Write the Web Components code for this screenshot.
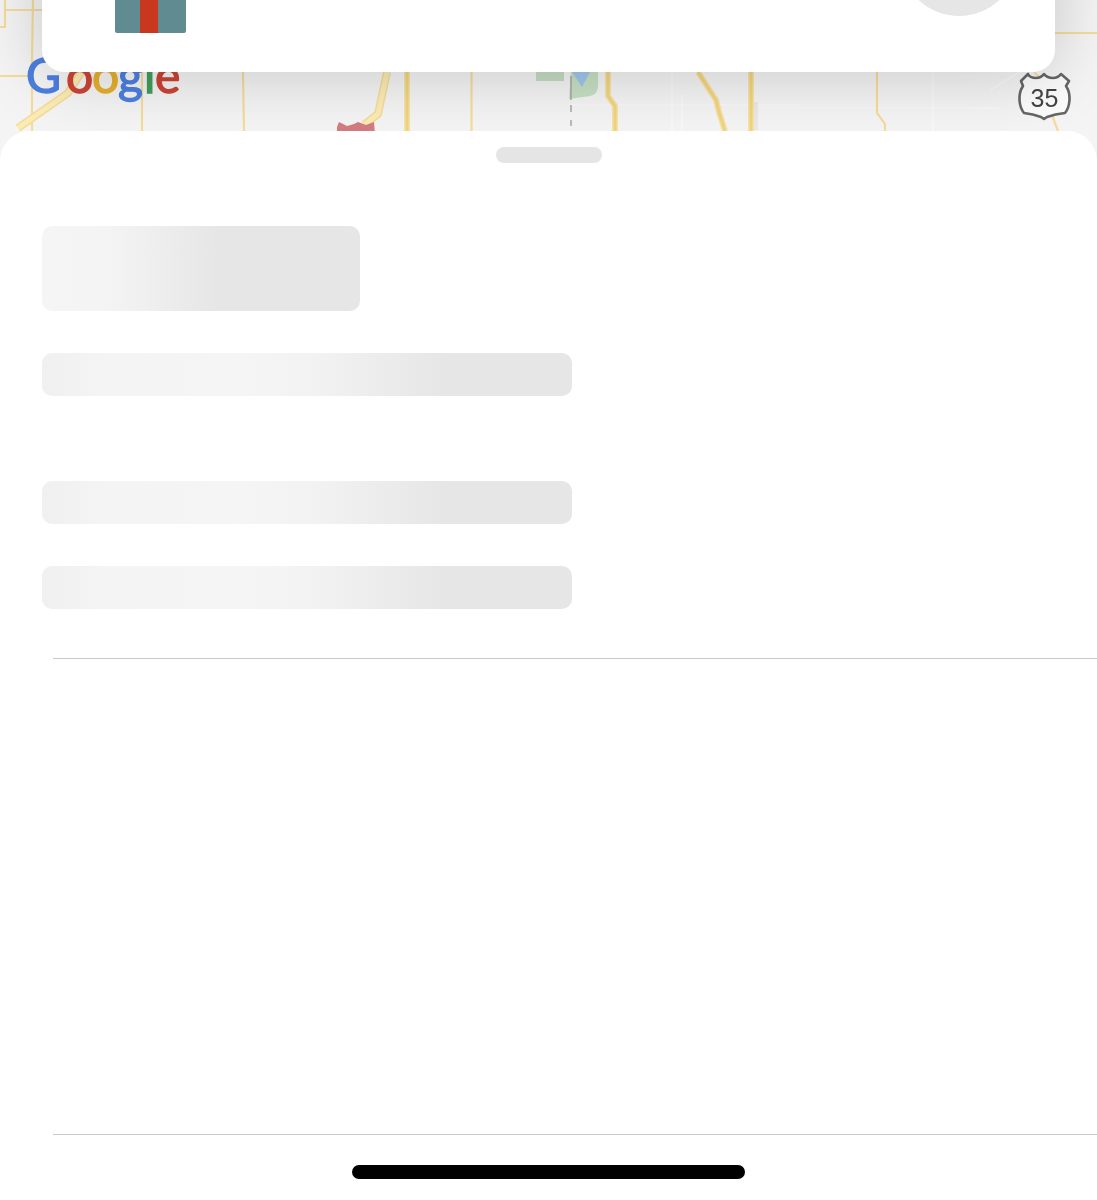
<!DOCTYPE html>
<html lang="en">
<head>
<meta charset="utf-8">
<title>Loading sheet</title>
<style>
    html, body { margin: 0; padding: 0; background: #fff; }
    body { width: 1097px; height: 1200px; overflow: hidden; font-family: "Liberation Sans", Arial, sans-serif; }
</style>
</head>
<body>
<map-view>
    <trip-card></trip-card>
</map-view>
<bottom-sheet>
    <skeleton-block size="title"></skeleton-block>
    <skeleton-block></skeleton-block>
    <skeleton-block class="gap"></skeleton-block>
    <skeleton-block></skeleton-block>
    <sheet-divider slot="rows"></sheet-divider>
    <sheet-divider slot="rows" class="last"></sheet-divider>
    <home-bar slot="rows"></home-bar>
</bottom-sheet>

<script>
class MapView extends HTMLElement {
    connectedCallback() {
        this.attachShadow({ mode: 'open' });
        this.shadowRoot.innerHTML = `
            <style>
                :host {
                    display: block;
                    position: relative;
                    height: 160px;
                    overflow: hidden;
                    background: #f4f4f4;
                }
                svg { position: absolute; left: 0; top: 0; filter: blur(0.6px); }
                .thin { fill: none; stroke: #f4dc9c; stroke-width: 2.2; }
                .casing { fill: none; stroke: #f6e3a8; stroke-width: 6; stroke-linejoin: round; }
                .core { fill: none; stroke: #f2d47e; stroke-width: 3; stroke-linejoin: round; }
                .pale { fill: none; stroke: #f4dc98; stroke-width: 8; stroke-linejoin: round; }
                .pale-core { fill: none; stroke: #fcebb4; stroke-width: 5; stroke-linejoin: round; }
                .minor { fill: none; stroke: #fafafa; stroke-width: 1.2; }
                .logo { font: 400 48px Lato, sans-serif; letter-spacing: -3px; stroke-width: 1.3; }
            </style>
            <svg width="1097" height="160" viewBox="0 0 1097 160">
                <!-- minor streets -->
                <path class="minor" d="M570 105H800M682 95V131M672 72V131M760 108H1000M933 72V131M990 90L1020 72"/>
                <path d="M750 102h8v28h-8z" fill="#e9e9e9"/>
                <!-- park and water -->
                <path d="M536 72h28v9h-28z" fill="#c5dcc2"/>
                <path d="M571 72h27v14q0 8-8 10l-21 3z" fill="#c6e0c4"/>
                <path d="M572 72l4 6 6 9 8-15z" fill="#a0c6ee"/>
                <path d="M571 76V100M571 105V112M571 120V126" stroke="#a8a8a8" stroke-width="1.5" fill="none"/>
                <!-- thin roads -->
                <path class="thin" d="M33 0L32 60V131M6 10H42M5 0V27H0M0 76H30M142 72V131M243 72L244 131M471.500 72V131M1055 33H1097"/>
                <path class="thin" d="M877 72V113L885 124V131"/>
                <path class="thin" d="M1052 115L1058 131M1034 72L1040 78"/>
                <!-- arterials -->
                <path class="pale" d="M84 68L68 93L18 128"/>
                <path class="pale" d="M387 72L378 114L364 125"/>
                <path class="pale-core" d="M84 68L68 93L18 128"/>
                <path class="pale-core" d="M387 72L378 114L364 125"/>
                <g>
                    <path class="casing" d="M407 72V131"/>
                    <path class="casing" d="M608 72V96L615 106V131"/>
                    <path class="casing" d="M698 72L716 100L719 112L725 131"/>
                    <path class="casing" d="M751 72V131"/>
                    <path class="core" d="M407 72V131"/>
                    <path class="core" d="M608 72V96L615 106V131"/>
                    <path class="core" d="M698 72L716 100L719 112L725 131"/>
                    <path class="core" d="M751 72V131"/>
                </g>
                <!-- red landmark -->
                <path d="M337 135V127L339 122L347 126L354 124L358 122L366 125L374 122L375 135z" fill="#d27c7e"/>
                <!-- Google wordmark -->
                <text class="logo" y="92.500" x="26 66 92 118 144 155"><tspan fill="#4c7fe0" stroke="#4c7fe0">G</tspan><tspan fill="#cb4435" stroke="#cb4435">o</tspan><tspan fill="#e5b02e" stroke="#e5b02e">o</tspan><tspan fill="#4c7fe0" stroke="#4c7fe0">g</tspan><tspan fill="#3f9f58" stroke="#3f9f58">l</tspan><tspan fill="#cb4435" stroke="#cb4435">e</tspan></text>
                <!-- US 35 shield -->
                <path d="M1021 81L1028 74Q1030 78 1036 78Q1041 78 1044 74Q1047 78 1053 78Q1058 78 1061 74L1069 81L1066 86Q1070 92 1069.500 100Q1069 108 1065 113Q1055 114 1047 117L1044 119L1041 117Q1033 114 1024 113Q1020 108 1019.500 100Q1019 92 1023 86z"
                      fill="#fbfbfb" stroke="#666" stroke-width="2.600" stroke-linejoin="round"/>
                <text x="1044.500" y="107" text-anchor="middle" font-family="Liberation Sans, Arial, sans-serif" font-size="25" fill="#444">35</text>
            </svg>
            <slot></slot>
        `;
    }
}

class TripCard extends HTMLElement {
    connectedCallback() {
        this.attachShadow({ mode: 'open' });
        this.shadowRoot.innerHTML = `
            <style>
                :host {
                    display: block;
                    position: absolute; /* floats over the map, scrolled partly off the top */
                    left: 42px;
                    right: 42px;
                    top: -60px;
                    height: 132px;
                    background: #fff;
                    border-radius: 0 0 22px 22px;
                    box-shadow: 0 0 70px rgba(0, 0, 0, 0.2);
                    box-sizing: border-box;
                    padding: 0 37px 39px 73px;
                }
                .row {
                    height: 100%;
                    display: flex;
                    justify-content: space-between;
                    align-items: flex-end;
                }
                .gift {
                    width: 71px;
                    height: 93px;
                    border-radius: 2px;
                    background: linear-gradient(90deg, #5f8b91 0 25px, #c9371f 25px 43px, #5f8b91 43px);
                }
                .avatar {
                    width: 118px;
                    height: 118px;
                    margin-bottom: 17px;
                    border-radius: 50%;
                    background: #e6e6e6;
                }
            </style>
            <div class="row">
                <div class="gift"></div>
                <div class="avatar"></div>
            </div>
        `;
    }
}

class BottomSheet extends HTMLElement {
    connectedCallback() {
        this.attachShadow({ mode: 'open' });
        this.shadowRoot.innerHTML = `
            <style>
                :host {
                    display: block;
                    position: relative;
                    margin-top: -29px; /* overlaps the map */
                    height: 1069px;
                    background: #fff;
                    border-radius: 30px 30px 0 0;
                }
                .handle {
                    width: 106px;
                    height: 16px;
                    margin: 0 auto;
                    position: relative;
                    top: 16px;
                    background: #e5e5e5;
                    border-radius: 8px;
                }
                .blocks {
                    display: flex;
                    flex-direction: column;
                    gap: 42.5px;
                    padding: 79px 0 0 42px;
                }
                .rows { padding-top: 49.5px; }
            </style>
            <div class="handle"></div>
            <div class="blocks"><slot></slot></div>
            <div class="rows"><slot name="rows"></slot></div>
        `;
    }
}

class SkeletonBlock extends HTMLElement {
    connectedCallback() {
        this.attachShadow({ mode: 'open' });
        this.shadowRoot.innerHTML = `
            <style>
                :host {
                    display: block;
                    width: 530px;
                    height: 42.5px;
                    border-radius: 10px;
                    background: linear-gradient(90deg, #f0f0f0 0%, #f4f4f4 12%, #f5f5f5 38%, #f2f2f2 52%, #e6e6e6 76%);
                }
                :host([size="title"]) {
                    width: 318px;
                    height: 85px;
                    margin-bottom: -0.5px;
                    background: linear-gradient(90deg, #f5f5f5 0%, #f4f4f4 20%, #eeeeee 36%, #e6e6e6 55%);
                }
                :host(.gap) { margin-top: 43px; }
            </style>
        `;
    }
}

class SheetDivider extends HTMLElement {
    connectedCallback() {
        this.attachShadow({ mode: 'open' });
        this.shadowRoot.innerHTML = `
            <style>
                :host {
                    display: block;
                    height: 1px;
                    margin-left: 53px;
                    background: #c9c9c9;
                }
                :host(.last) { margin-top: 475px; }
            </style>
        `;
    }
}

class HomeBar extends HTMLElement {
    connectedCallback() {
        this.attachShadow({ mode: 'open' });
        this.shadowRoot.innerHTML = `
            <style>
                :host {
                    display: block;
                    width: 393px;
                    height: 14px;
                    margin: 30px 0 0 352px;
                    background: #000;
                    border-radius: 7px;
                }
            </style>
        `;
    }
}

customElements.define('map-view', MapView);
customElements.define('trip-card', TripCard);
customElements.define('bottom-sheet', BottomSheet);
customElements.define('skeleton-block', SkeletonBlock);
customElements.define('sheet-divider', SheetDivider);
customElements.define('home-bar', HomeBar);
</script>
</body>
</html>
